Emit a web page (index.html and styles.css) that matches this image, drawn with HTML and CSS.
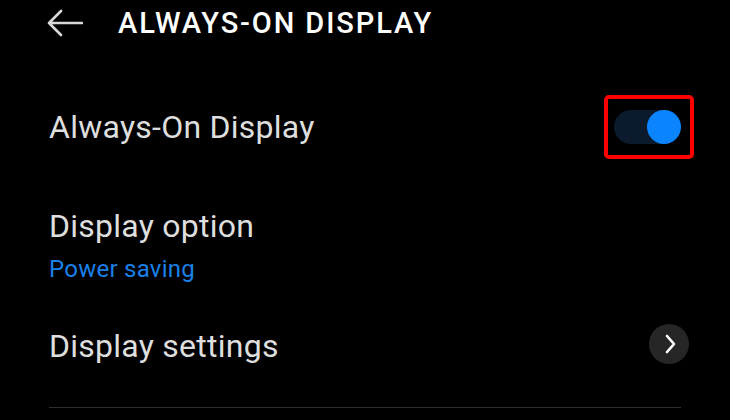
FILE: index.html
```html
<!DOCTYPE html>
<html lang="en">
<head>
    <meta charset="UTF-8">
    <meta name="viewport" content="width=device-width, initial-scale=1.0">
    <title>Always-On Display</title>
    <link rel="stylesheet" href="styles.css">
</head>
<body>
    <header class="top-bar">
        <svg class="back-icon" width="36" height="28" viewBox="0 0 36 28">
            <path d="M35 14H2M14 2L2 14L14 26" fill="none" stroke="#d8d8d8" stroke-width="2.6" stroke-linecap="round" stroke-linejoin="round"/>
        </svg>
        <h1 class="page-title">ALWAYS-ON DISPLAY</h1>
    </header>

    <div class="row row-toggle">
        <span class="row-label">Always-On Display</span>
        <div class="highlight">
            <div class="switch"><span class="knob"></span></div>
        </div>
    </div>

    <div class="row row-option">
        <div>
            <div class="row-label">Display option</div>
            <div class="row-sub">Power saving</div>
        </div>
    </div>

    <div class="row row-link">
        <span class="row-label">Display settings</span>
        <span class="more-btn">
            <svg width="14" height="20" viewBox="0 0 14 20">
                <path d="M4 2L11 10L4 18" fill="none" stroke="#fff" stroke-width="2.6" stroke-linecap="round" stroke-linejoin="round"/>
            </svg>
        </span>
    </div>

    <div class="divider"></div>
</body>
</html>
```

FILE: styles.css
```css
* {
    margin: 0;
    padding: 0;
    box-sizing: border-box;
}

body {
    background: #000;
    color: #dedede;
    font-family: Roboto, 'Noto Sans', sans-serif;
    width: 730px;
    height: 420px;
    overflow: hidden;
}

.top-bar {
    height: 46px;
    display: flex;
    align-items: center;
    padding-left: 47px;
}

.back-icon {
    display: block;
    margin-right: 35px;
}

.page-title {
    font-size: 29px;
    font-weight: 500;
    line-height: 40px;
    color: #fff;
    letter-spacing: 1.9px;
}

.row {
    display: flex;
    align-items: center;
    justify-content: space-between;
    padding: 0 36px 0 49px;
}

.row-label {
    font-size: 32px;
    line-height: 40px;
    color: #dedede;
    letter-spacing: 0.25px;
}

.row-toggle {
    height: 161px;
}

.row-option {
    margin-top: -1px;
}

.row-sub {
    margin-top: 8px;
    font-size: 24px;
    line-height: 30px;
    color: #1a80ea;
    letter-spacing: 0.25px;
}

.row-link {
    margin-top: 40px;
}

.highlight {
    width: 90px;
    height: 64px;
    border: 4px solid #f00;
    border-radius: 5px;
    display: flex;
    align-items: center;
    padding-left: 6px;
}

.switch {
    width: 67px;
    height: 34px;
    border-radius: 17px;
    background: #0b1a2c;
    display: flex;
    justify-content: flex-end;
}

.knob {
    width: 34px;
    height: 34px;
    border-radius: 50%;
    background: #0a84ff;
}

.more-btn {
    width: 40px;
    height: 40px;
    border-radius: 50%;
    background: #262626;
    display: flex;
    align-items: center;
    justify-content: center;
    margin-right: 5px;
    margin-bottom: 4px;
}

.more-btn svg {
    display: block;
    margin-left: 2px;
}

.divider {
    margin: 39px 49px 0 49px;
    height: 1px;
    background: #2e2e2e;
}
```
